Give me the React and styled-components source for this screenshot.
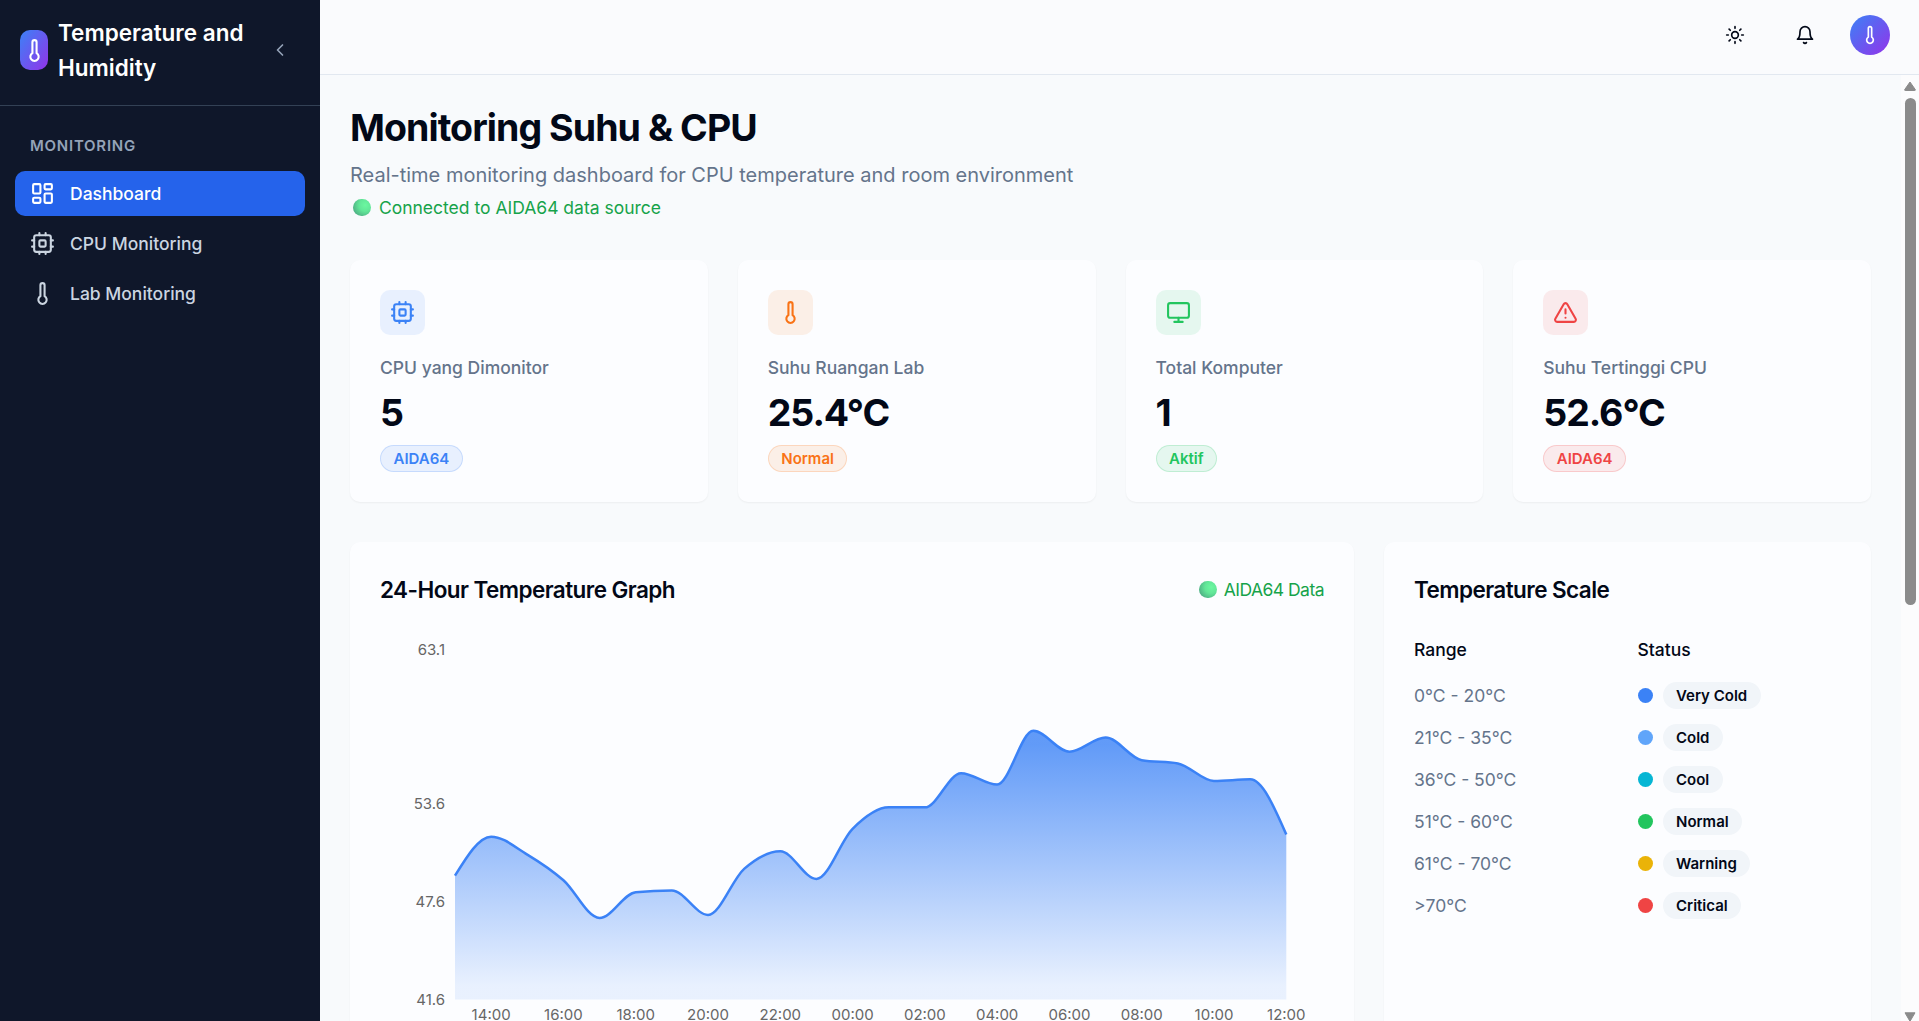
import React from "react";
import styled, { createGlobalStyle } from "styled-components";

const GlobalStyle = createGlobalStyle`
  *, *::before, *::after { box-sizing: border-box; }
  html { font-size: 20px; }
  body { margin: 0; overflow: hidden; background: #f8fafc; }
  h1, h2, p { margin: 0; }
  button { border: 0; padding: 0; background: none; font: inherit; color: inherit; }
`;

const Shell = styled.div`
  display: flex;
  height: 100vh;
  font-family: Inter, "Liberation Sans", sans-serif;
  color: #020817;
  overflow: hidden;
`;

const Sidebar = styled.aside`
  width: 16rem;
  flex: none;
  background: #0f172a;
  color: #fff;
`;

const Brand = styled.div`
  display: flex;
  align-items: center;
  height: 106px;
  padding: 0 1rem 5px;
  border-bottom: 1px solid #334155;
`;

const Logo = styled.div`
  display: flex;
  align-items: center;
  justify-content: center;
  flex: none;
  width: 28px;
  height: 2rem;
  border-radius: 10px;
  background: linear-gradient(to bottom right, #3b82f6, #9333ea);
`;

const BrandName = styled.div`
  flex: 1;
  margin-left: 10px;
  font-size: 1.125rem;
  line-height: 1.75rem;
  font-weight: 600;
`;

const CollapseButton = styled.button`
  display: flex;
  align-items: center;
  justify-content: center;
  width: 2rem;
  height: 2rem;
  color: #94a3b8;
`;

const Nav = styled.nav`
  display: flex;
  flex-direction: column;
  gap: 5px;
  padding: 25px 15px;
`;

const NavHeading = styled.div`
  padding: 5px 15px 10px;
  font-size: 0.75rem;
  line-height: 20px;
  font-weight: 600;
  letter-spacing: 0.05em;
  color: #94a3b8;
`;

const NavItem = styled.a`
  display: flex;
  align-items: center;
  gap: 15px;
  height: 45px;
  padding: 0 15px;
  border-radius: 10px;
  font-size: 0.875rem;
  font-weight: 500;
  color: ${(p) => (p.$active ? "#fff" : "#cbd5e1")};
  background: ${(p) => (p.$active ? "#2563eb" : "transparent")};
`;

const Main = styled.div`
  display: flex;
  flex-direction: column;
  flex: 1;
  min-width: 0;
`;

const TopBar = styled.header`
  display: flex;
  flex: none;
  align-items: center;
  justify-content: flex-end;
  gap: 1rem;
  height: 75px;
  padding: 0 29px 4px 30px;
  background: #fafbfd;
  border-bottom: 1px solid #e2e8f0;
`;

const IconButton = styled.button`
  display: flex;
  align-items: center;
  justify-content: center;
  width: 2.5rem;
  height: 2.5rem;
`;

const Avatar = styled.div`
  display: flex;
  align-items: center;
  justify-content: center;
  width: 2rem;
  height: 2rem;
  border-radius: 50%;
  color: #fff;
  background: linear-gradient(to bottom right, #3b82f6, #9333ea);
`;

const ScrollArea = styled.div`
  display: flex;
  flex: 1;
  min-height: 0;
`;

const Content = styled.main`
  flex: 1;
  min-width: 0;
  padding: 30px 30px 0;
  overflow: hidden;
  background: #f8fafc;
`;

const ScrollTrack = styled.div`
  display: flex;
  flex-direction: column;
  align-items: center;
  flex: none;
  width: 18px;
  padding-top: 6px;
  background: #fcfcfd;
`;

const ScrollThumb = styled.div`
  width: 11px;
  height: 507px;
  margin: 7px 0 auto;
  border-radius: 6px;
  background: #8b8b8b;
`;

const Title = styled.h1`
  font-size: 1.875rem;
  line-height: 2.25rem;
  font-weight: 700;
  letter-spacing: -0.025em;
`;

const Subtitle = styled.p`
  margin-top: 10px;
  font-size: 1rem;
  line-height: 30px;
  color: #64748b;
`;

const Connection = styled.div`
  display: flex;
  align-items: center;
  gap: ${(p) => (p.$tight ? "7px" : "8.4px")};
  margin-top: ${(p) => (p.$tight ? 0 : "5px")};
  padding-left: ${(p) => (p.$tight ? 0 : "3px")};
  font-size: 0.875rem;
  line-height: 1.25rem;
  letter-spacing: ${(p) => (p.$tight ? "-0.03em" : "normal")};
  color: #16a34a;
`;

const Orb = styled.span`
  width: 17.5px;
  height: 17.5px;
  border-radius: 50%;
  background: radial-gradient(circle at 68% 36%, #6cf7a0 0%, #62e698 38%, #50b586 75%, #488f7c 100%);
`;

const StatGrid = styled.section`
  display: grid;
  grid-template-columns: repeat(4, minmax(0, 1fr));
  gap: 30px;
  margin-top: 40px;
`;

const Card = styled.div`
  padding: 30px;
  border-radius: 10px;
  background: #fcfdff;
  box-shadow: 0 1px 2px rgba(0, 0, 0, 0.05);
`;

const StatCard = styled(Card)`
  display: flex;
  flex-direction: column;
  align-items: flex-start;
  height: 242px;
`;

const StatIcon = styled.div`
  display: flex;
  align-items: center;
  justify-content: center;
  width: 45px;
  height: 45px;
  border-radius: 10px;
  color: ${(p) => p.$color};
  background: ${(p) => p.$color}1a;
`;

const StatLabel = styled.div`
  margin-top: 20px;
  font-size: 0.875rem;
  line-height: 1.25rem;
  font-weight: 500;
  color: #64748b;
`;

const StatValue = styled.div`
  margin: 10px 0;
  font-size: 1.875rem;
  line-height: 2.25rem;
  font-weight: 700;
  letter-spacing: -0.028em;
`;

const Badge = styled.span`
  padding: 2.5px 12.5px;
  border: 1px solid ${(p) => (p.$color ? p.$color + "33" : "transparent")};
  border-radius: 14px;
  font-size: 0.75rem;
  line-height: 1rem;
  font-weight: 600;
  color: ${(p) => p.$color || "#020817"};
  background: ${(p) => (p.$color ? p.$color + "1a" : "#f1f5f9")};
`;

const PanelGrid = styled.section`
  display: grid;
  grid-template-columns: repeat(3, minmax(0, 1fr));
  gap: 30px;
  margin-top: 40px;
`;

const Panel = styled(Card)`
  grid-column: span ${(p) => p.$span || 1};
  height: 560px;
`;

const PanelHeader = styled.div`
  display: flex;
  align-items: center;
  justify-content: space-between;
  height: 35px;
`;

const PanelTitle = styled.h2`
  font-size: 1.125rem;
  line-height: 1.75rem;
  font-weight: 600;
  letter-spacing: -0.025em;
`;

const ChartSvg = styled.svg`
  display: block;
  margin-top: 30px;
  overflow: visible;

  text {
    font-size: 15px;
    fill: #666;
  }
`;

const ScaleTable = styled.div`
  display: grid;
  grid-template-columns: 1fr 1fr;
  column-gap: 20px;
  row-gap: 15px;
  margin-top: 30px;
`;

const ScaleHead = styled.div`
  margin-bottom: 5px;
  font-size: 0.875rem;
  line-height: 1.25rem;
  font-weight: 500;
`;

const ScaleRange = styled.div`
  font-size: 0.875rem;
  line-height: 27px;
  color: #64748b;
`;

const ScaleStatus = styled.div`
  display: flex;
  align-items: center;
  gap: 10px;
`;

const Dot = styled.span`
  width: 15px;
  height: 15px;
  border-radius: 50%;
  background: ${(p) => p.$color};
`;

function Icon({ size = 25, children }) {
  return (
    <svg width={size} height={size} viewBox="0 0 24 24" fill="none" stroke="currentColor"
      strokeWidth="2" strokeLinecap="round" strokeLinejoin="round">
      {children}
    </svg>
  );
}

const Thermometer = ({ size }) => (
  <Icon size={size}><path d="M14 4v10.54a4 4 0 1 1-4 0V4a2 2 0 0 1 4 0Z" /></Icon>
);

const Cpu = () => (
  <Icon>
    <rect x="4" y="4" width="16" height="16" rx="2" />
    <rect x="9" y="9" width="6" height="6" rx="1" />
    <path d="M15 2v2M15 20v2M2 15h2M2 9h2M20 15h2M20 9h2M9 2v2M9 20v2" />
  </Icon>
);

const DashboardIcon = () => (
  <Icon>
    <rect x="3" y="3" width="7" height="9" rx="1" />
    <rect x="14" y="3" width="7" height="5" rx="1" />
    <rect x="14" y="12" width="7" height="9" rx="1" />
    <rect x="3" y="16" width="7" height="5" rx="1" />
  </Icon>
);

const MonitorIcon = () => (
  <Icon>
    <rect x="2" y="3" width="20" height="14" rx="2" />
    <path d="M8 21h8M12 17v4" />
  </Icon>
);

const Alert = () => (
  <Icon>
    <path d="m21.73 18-8-14a2 2 0 0 0-3.48 0l-8 14A2 2 0 0 0 4 21h16a2 2 0 0 0 1.73-3Z" />
    <path d="M12 9v4M12 17h.01" />
  </Icon>
);

const Sun = () => (
  <Icon size={20}>
    <circle cx="12" cy="12" r="4" />
    <path d="M12 2v2M12 20v2M4.93 4.93l1.41 1.41M17.66 17.66l1.41 1.41M2 12h2M20 12h2M6.34 17.66l-1.41 1.41M19.07 4.93l-1.41 1.41" />
  </Icon>
);

const Bell = () => (
  <Icon size={20}>
    <path d="M6 8a6 6 0 0 1 12 0c0 7 3 9 3 9H3s3-2 3-9" />
    <path d="M10.3 21a1.94 1.94 0 0 0 3.4 0" />
  </Icon>
);

const NAV = [
  { label: "Dashboard", icon: <DashboardIcon />, active: true },
  { label: "CPU Monitoring", icon: <Cpu /> },
  { label: "Lab Monitoring", icon: <Thermometer /> },
];

const STATS = [
  { label: "CPU yang Dimonitor", value: "5", badge: "AIDA64", color: "#3b82f6", icon: <Cpu /> },
  { label: "Suhu Ruangan Lab", value: "25.4°C", badge: "Normal", color: "#f97316", icon: <Thermometer /> },
  { label: "Total Komputer", value: "1", badge: "Aktif", color: "#22c55e", icon: <MonitorIcon /> },
  { label: "Suhu Tertinggi CPU", value: "52.6°C", badge: "AIDA64", color: "#ef4444", icon: <Alert /> },
];

const SCALE = [
  ["0°C - 20°C", "Very Cold", "#3b82f6"],
  ["21°C - 35°C", "Cold", "#60a5fa"],
  ["36°C - 50°C", "Cool", "#06b6d4"],
  ["51°C - 60°C", "Normal", "#22c55e"],
  ["61°C - 70°C", "Warning", "#eab308"],
  [">70°C", "Critical", "#ef4444"],
];

const FIRST_HOUR = 13;
const TEMPS = [
  49.2, 51.6, 50.5, 48.92, 46.6, 48.19, 48.29, 46.79, 49.62, 50.7, 49.0, 52.08,
  53.4, 53.4, 55.5, 54.8, 58.1, 56.82, 57.69, 56.3, 56.1, 55.02, 55.12, 51.74,
];
const Y_TICKS = [63.1, 53.6, 47.6, 41.6];
const PLOT = { left: 75, right: 906.3, top: 12.5, bottom: 362.4 };

// Monotone cubic interpolation, so peaks never overshoot the samples.
function monotonePath(pts) {
  const n = pts.length;
  const slope = (i) => (pts[i + 1][1] - pts[i][1]) / (pts[i + 1][0] - pts[i][0]);
  const t = new Array(n).fill(0);
  for (let i = 1; i < n - 1; i++) {
    const a = slope(i - 1);
    const b = slope(i);
    const p = (a + b) / 2;
    t[i] = (Math.sign(a) + Math.sign(b)) * Math.min(Math.abs(a), Math.abs(b), 0.5 * Math.abs(p)) || 0;
  }
  t[0] = (3 * slope(0) - t[1]) / 2;
  t[n - 1] = (3 * slope(n - 2) - t[n - 2]) / 2;
  let d = `M${pts[0][0]},${pts[0][1]}`;
  for (let i = 0; i < n - 1; i++) {
    const [x0, y0] = pts[i];
    const [x1, y1] = pts[i + 1];
    const dx = (x1 - x0) / 3;
    d += `C${x0 + dx},${y0 + dx * t[i]},${x1 - dx},${y1 - dx * t[i + 1]},${x1},${y1}`;
  }
  return d;
}

function TemperatureChart() {
  const min = Y_TICKS[Y_TICKS.length - 1];
  const max = Y_TICKS[0];
  const toX = (i) => PLOT.left + (i * (PLOT.right - PLOT.left)) / (TEMPS.length - 1);
  const toY = (v) => PLOT.bottom - ((v - min) / (max - min)) * (PLOT.bottom - PLOT.top);
  const line = monotonePath(TEMPS.map((v, i) => [toX(i), toY(v)]));
  return (
    <ChartSvg width="943" height="400">
      <defs>
        <linearGradient id="tempFill" x1="0" y1="0" x2="0" y2="1">
          <stop offset="5%" stopColor="#3b82f6" stopOpacity="0.8" />
          <stop offset="95%" stopColor="#3b82f6" stopOpacity="0.1" />
        </linearGradient>
      </defs>
      <path d={`${line}L${PLOT.right},${PLOT.bottom}L${PLOT.left},${PLOT.bottom}Z`} fill="url(#tempFill)" />
      <path d={line} fill="none" stroke="#3b82f6" strokeWidth="2.5" />
      {Y_TICKS.map((v) => (
        <text key={v} x={PLOT.left - 10} y={toY(v) + 5.3} textAnchor="end">{v}</text>
      ))}
      {TEMPS.map((_, i) =>
        i % 2 === 1 ? (
          <text key={i} x={toX(i)} y={PLOT.bottom + 20.2} textAnchor="middle">
            {String((FIRST_HOUR + i) % 24).padStart(2, "0") + ":00"}
          </text>
        ) : null
      )}
    </ChartSvg>
  );
}

export default function App() {
  return (
    <Shell>
      <GlobalStyle />
      <Sidebar>
        <Brand>
          <Logo><Thermometer /></Logo>
          <BrandName>Temperature and Humidity</BrandName>
          <CollapseButton aria-label="Collapse">
            <Icon size={20}><path d="m15 18-6-6 6-6" /></Icon>
          </CollapseButton>
        </Brand>
        <Nav>
          <NavHeading>MONITORING</NavHeading>
          {NAV.map((item) => (
            <NavItem key={item.label} $active={item.active}>
              {item.icon}
              {item.label}
            </NavItem>
          ))}
        </Nav>
      </Sidebar>
      <Main>
        <TopBar>
          <IconButton aria-label="Theme"><Sun /></IconButton>
          <IconButton aria-label="Notifications"><Bell /></IconButton>
          <Avatar><Thermometer size={20} /></Avatar>
        </TopBar>
        <ScrollArea>
          <Content>
            <Title>Monitoring Suhu &amp; CPU</Title>
            <Subtitle>Real-time monitoring dashboard for CPU temperature and room environment</Subtitle>
            <Connection><Orb />Connected to AIDA64 data source</Connection>
            <StatGrid>
              {STATS.map((s) => (
                <StatCard key={s.label}>
                  <StatIcon $color={s.color}>{s.icon}</StatIcon>
                  <StatLabel>{s.label}</StatLabel>
                  <StatValue>{s.value}</StatValue>
                  <Badge $color={s.color}>{s.badge}</Badge>
                </StatCard>
              ))}
            </StatGrid>
            <PanelGrid>
              <Panel $span={2}>
                <PanelHeader>
                  <PanelTitle>24-Hour Temperature Graph</PanelTitle>
                  <Connection $tight><Orb />AIDA64 Data</Connection>
                </PanelHeader>
                <TemperatureChart />
              </Panel>
              <Panel>
                <PanelHeader><PanelTitle>Temperature Scale</PanelTitle></PanelHeader>
                <ScaleTable>
                  <ScaleHead>Range</ScaleHead>
                  <ScaleHead>Status</ScaleHead>
                  {SCALE.map(([range, status, color]) => (
                    <React.Fragment key={status}>
                      <ScaleRange>{range}</ScaleRange>
                      <ScaleStatus><Dot $color={color} /><Badge>{status}</Badge></ScaleStatus>
                    </React.Fragment>
                  ))}
                </ScaleTable>
              </Panel>
            </PanelGrid>
          </Content>
          <ScrollTrack>
            <svg width="12" height="10" viewBox="0 0 12 10"><path d="M6 1 11.3 8.6Q11.5 9.5 10.8 9.5H1.2Q.5 9.5.7 8.6Z" fill="#8b8b8b" stroke="#8b8b8b" strokeLinejoin="round" /></svg>
            <ScrollThumb />
            <svg width="12" height="9" viewBox="0 0 12 9"><path d="M1 .8H11L6 9.3Z" fill="#8b8b8b" stroke="#8b8b8b" strokeLinejoin="round" /></svg>
          </ScrollTrack>
        </ScrollArea>
      </Main>
    </Shell>
  );
}
